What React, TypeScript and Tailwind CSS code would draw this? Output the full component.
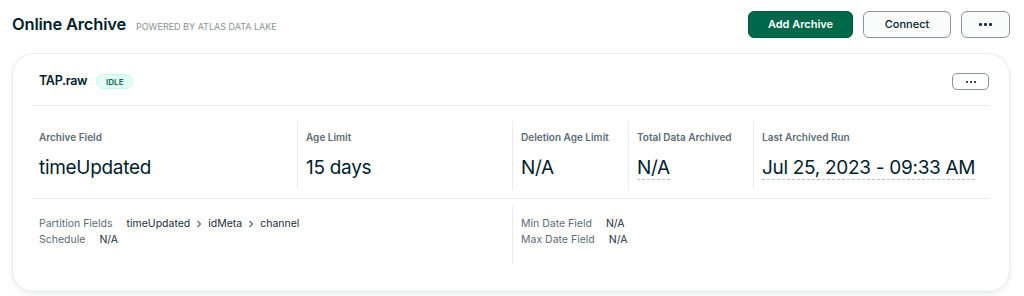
import React from "react";

const Dots = ({ size = 3, gap = 2, color = "#1C2D38" }: { size?: number; gap?: number; color?: string }) => {
  const w = size * 3 + gap * 2;
  return (
    <svg width={w} height={size} viewBox={`0 0 ${w} ${size}`}>
      {[0, 1, 2].map((i) => (
        <rect key={i} x={i * (size + gap)} y={0} width={size} height={size} rx={size / 3} fill={color} />
      ))}
    </svg>
  );
};

const Chevron = () => (
  <svg width="6" height="8" viewBox="0 0 6 8" className="mx-[6px]">
    <path d="M1.5 1 L4.5 4 L1.5 7" fill="none" stroke="#5C6C75" strokeWidth="1.2" />
  </svg>
);

export default function App() {
  return (
    <div
      className="w-[1024px] h-[296px] bg-white overflow-hidden"
      style={{ fontFamily: "Inter, 'Noto Sans', sans-serif" }}
    >
      {/* Page header */}
      <div className="flex items-center justify-between pl-[12px] pr-[14px] pt-[11px] h-[38px]">
        <div className="flex items-baseline">
          <span className="text-[16.5px] font-semibold text-[#001E2B] tracking-[-0.2px]">Online Archive</span>
          <span className="ml-[10px] text-[9px] text-[#889397] uppercase">Powered by Atlas Data Lake</span>
        </div>
        <div className="flex items-center gap-[10px]">
          <button className="w-[105px] h-[27px] rounded-[6px] bg-[#00684A] border border-[#00593F] text-white text-[11px] font-semibold">
            Add Archive
          </button>
          <button className="w-[88px] h-[27px] rounded-[6px] bg-[#F9FBFA] border border-[#889397] text-[#001E2B] text-[11px] font-medium">
            Connect
          </button>
          <button className="w-[49px] h-[27px] rounded-[6px] bg-[#F9FBFA] border border-[#889397] flex items-center justify-center">
            <Dots size={3} gap={2} color="#1C2D38" />
          </button>
        </div>
      </div>

      {/* Card */}
      <div className="ml-[12px] mr-[14px] mt-[15px] h-[239px] rounded-[22px] border border-[#E8EDEB] bg-white shadow-[0_3px_6px_rgba(0,30,43,0.08)] px-[19px]">
        {/* card header */}
        <div className="h-[52px] border-b border-[#E8EDEB] flex items-center justify-between pt-[4px] pl-[7px] pr-[1px]">
          <div className="flex items-center">
            <span className="text-[12.5px] font-semibold text-[#001E2B] tracking-[-0.3px]">TAP.raw</span>
            <span className="ml-[9px] h-[15px] w-[37px] rounded-full bg-[#E3FCF7] border border-[#C0FAE6] text-[#00684A] text-[8px] font-semibold flex items-center justify-center">
              IDLE
            </span>
          </div>
          <button className="w-[37px] h-[17px] rounded-[5px] border border-[#889397] bg-white flex items-center justify-center">
            <Dots size={2} gap={2} color="#1C2D38" />
          </button>
        </div>

        {/* stats row */}
        <div className="border-b border-[#E8EDEB] pt-[15px] pb-[8px] flex">
          <StatCell first width="w-[265px]" label="Archive Field" value="timeUpdated" />
          <StatCell width="w-[215px]" label="Age Limit" value="15 days" />
          <StatCell width="w-[116px]" label="Deletion Age Limit" value="N/A" />
          <StatCell width="w-[125px]" label="Total Data Archived" value="N/A" dashed />
          <StatCell width="flex-1" label="Last Archived Run" value="Jul 25, 2023 - 09:33 AM" dashed />
        </div>

        {/* bottom details */}
        <div className="pt-[7px] flex">
          <div className="w-[480px] h-[58px] pl-[7px] pt-[10px] text-[10.5px] leading-[16px]">
            <div className="flex items-center">
              <span className="text-[#5C6C75]">Partition Fields</span>
              <span className="ml-[14px] text-[#1C2D38]">timeUpdated</span>
              <Chevron />
              <span className="text-[#1C2D38]">idMeta</span>
              <Chevron />
              <span className="text-[#1C2D38]">channel</span>
            </div>
            <div className="flex items-center">
              <span className="text-[#5C6C75]">Schedule</span>
              <span className="ml-[14px] text-[#1C2D38]">N/A</span>
            </div>
          </div>
          <div className="flex-1 h-[58px] border-l border-[#E8EDEB] pl-[8px] pt-[10px] text-[10.5px] leading-[16px]">
            <div className="flex items-center">
              <span className="text-[#5C6C75]">Min Date Field</span>
              <span className="ml-[14px] text-[#1C2D38]">N/A</span>
            </div>
            <div className="flex items-center">
              <span className="text-[#5C6C75]">Max Date Field</span>
              <span className="ml-[14px] text-[#1C2D38]">N/A</span>
            </div>
          </div>
        </div>
      </div>
    </div>
  );
}

function StatCell({
  label,
  value,
  width,
  first,
  dashed,
}: {
  label: string;
  value: string;
  width: string;
  first?: boolean;
  dashed?: boolean;
}) {
  return (
    <div className={`${width} h-[69px] ${first ? "pl-[7px]" : "border-l border-[#E8EDEB] pl-[8px]"} pt-[9px]`}>
      <div className="text-[10px] leading-[14px] font-semibold text-[#5C6C75]">{label}</div>
      <div className="mt-[12px] text-[19px] leading-[24px] text-[#001E2B] tracking-[-0.3px]">
        <span className={dashed ? "inline-block border-b border-dashed border-[#B8C4C2] leading-[23px]" : ""}>
          {value}
        </span>
      </div>
    </div>
  );
}
